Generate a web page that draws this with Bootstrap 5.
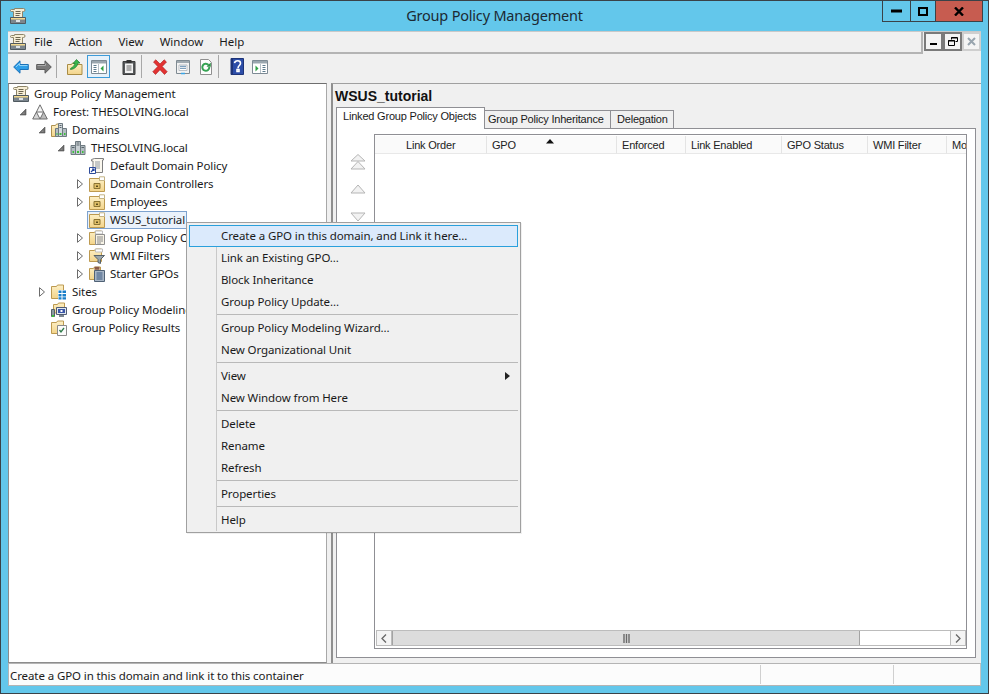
<!DOCTYPE html>
<html lang="en">
<head>
<meta charset="utf-8">
<title>Group Policy Management</title>
<link href="https://cdn.jsdelivr.net/npm/bootstrap@5.3.0/dist/css/bootstrap.min.css" rel="stylesheet">
<style>
html,body{margin:0;height:100%;overflow:hidden;background:#63c7eb}
body{font-family:"Noto Sans","Liberation Sans",sans-serif;font-size:11.5px;letter-spacing:-.1px;line-height:18px;color:#1a1a1a}
.gp-win{width:989px;height:694px;border:1px solid #3a4248;background:#63c7eb;position:relative}
.gp-title{height:30px;display:grid;grid-template-columns:1fr auto 1fr;align-items:start}
.gp-title-icon{margin:7px 0 0 9px;display:block}
.gp-title-text{font-size:14.5px;letter-spacing:-.2px;line-height:29px;color:#1c2a33}
.gp-ctrls{display:flex;justify-content:flex-end;margin-top:-1px;margin-right:5px}
.gp-ctrl{height:22px;border:1px solid #3a4248;border-left:0;display:flex;align-items:center;justify-content:center}
.gp-ctrl:first-child{border-left:1px solid #3a4248}
.gp-ctrl-min{width:29px}.gp-ctrl-max{width:25px}.gp-ctrl-close{width:47px;background:#c75c50}
.gp-client{height:655px;margin:0 7px;background:#f0f0f0;display:flex;flex-direction:column;border-top:1px solid #c9c9c9}
.gp-menubar{height:22px;display:flex;flex:none}
.gp-menu-main{flex:1;display:flex;align-items:center;border-right:2px solid #b4b4b4;border-bottom:2px solid #b4b4b4;padding-left:2px}
.gp-menu-item{padding:0 8px;line-height:18px;letter-spacing:0}
.gp-mdi{display:flex;width:58px;padding-left:1px}
.gp-mdi-btn{width:19px;height:19px;border:2px solid #7a7a7a;background:#f4f4f4;display:flex;align-items:center;justify-content:center}
.gp-mdi-off{border-color:#cfcfcf}
.gp-toolbar{height:29px;flex:none;display:flex;align-items:center;padding:0 0 4px 1px}
.gp-tool{width:23px;height:23px;display:flex;align-items:center;justify-content:center;flex:none}
.gp-tool-on{border:1px solid #3d9bd9;background:#e6f1fa;margin-left:1px}
.gp-tool-gap{margin-left:7px}
.gp-tsep{width:1px;height:23px;background:#a8a8a8;margin:0 6px 0 1px;flex:none}
.gp-panes{flex:1;display:flex;min-height:0}
.gp-tree{width:319px;flex:none;background:#fff;border:1px solid #8c8c8c;border-top-color:#6e6e6e;border-right-color:#a8a8a8;padding-top:1px;overflow:hidden}
.gp-row{height:18px;display:flex;align-items:center;white-space:nowrap}
.gp-lv0{padding-left:4px}.gp-lv1{padding-left:4px}.gp-lv2{padding-left:23px}.gp-lv3{padding-left:42px}.gp-lv4{padding-left:61px}
.gp-exp{width:19px;height:18px;flex:none;display:flex;align-items:center;justify-content:center}
.gp-node{display:flex;align-items:center;height:18px}
.gp-node svg{flex:none;margin-right:5px}
.gp-sel{background:#eaf2fb;box-shadow:inset 0 0 0 1px #7da2ce;margin-left:-2px;padding-left:2px;padding-right:2px;height:18px}
.gp-right{margin-left:4px;flex:1;min-width:0;display:flex;flex-direction:column;border-left:2px solid #8f8f8f;border-top:1px solid #a0a0a0}
.gp-head{height:23px;flex:none;padding-left:2px;font-family:"Liberation Sans",Arial,sans-serif;font-size:14px;letter-spacing:0;font-weight:700;line-height:24px;color:#111}
.gp-tabs{height:21px;flex:none;display:flex;align-items:flex-end;margin-left:3px;font-family:"Liberation Sans",Arial,sans-serif;font-size:11px;letter-spacing:-.2px;position:relative;z-index:1}
.gp-tab{height:18px;border:1px solid #8f8f94;border-bottom:0;border-left:0;background:#f0f0f0;line-height:17px;padding-left:3px}
.gp-tab-on{height:22px;width:149px;background:#fff;border-left:1px solid #8f8f94;padding-left:6px;line-height:17px;margin-bottom:-1px}
.gp-tab-inh{width:126px}.gp-tab-del{width:63px;padding-left:6px}
.gp-panel{flex:1;min-height:0;margin:0 5px 5px 3px;background:#fff;border:1px solid #8f8f94;display:flex}
.gp-moves{width:37px;flex:none;display:flex;flex-direction:column;align-items:center;padding-top:25px;padding-left:5px}
.gp-moves svg{display:block;margin-bottom:14px}
.gp-moves svg:nth-child(2){margin-bottom:16px}
.gp-list{flex:1;min-width:0;margin:5px 8px 8px 0;border:1px solid #8f8f94;display:flex;flex-direction:column;justify-content:space-between}
.gp-lhead{height:18px;margin-top:1px;display:flex;font-family:"Liberation Sans",Arial,sans-serif;font-size:11px;letter-spacing:-.2px;line-height:18px;background:#fafafa;overflow:hidden;position:relative;color:#222}
.gp-lh{flex:none;padding-left:5px;border-right:1px solid #e4e4e4;border-bottom:1px solid #e8e8e8;box-sizing:border-box}
.gp-c1{width:112px;padding-left:31px}.gp-c2{width:130px}.gp-c3{width:69px}.gp-c4{width:96px}.gp-c5{width:86px}.gp-c6{width:79px}.gp-c7{width:19px;border-right:0}
.gp-sort{position:absolute;left:171px;top:3px;display:block}
.gp-scroll{height:16px;margin:0 0 2px 1px;border:1px solid #bcbcbc;display:flex;flex:none;background:#fff}
.gp-sb-btn{width:15px;flex:none;display:flex;align-items:center;justify-content:center;background:#f4f4f4}
.gp-sb-l{border-right:1px solid #bcbcbc}.gp-sb-r{border-left:1px solid #bcbcbc;margin-left:auto}
.gp-thumb{width:468px;flex:none;background:#dcdcdc;border:1px solid #a3a3a3;border-width:0 1px;display:flex;align-items:center;justify-content:center}
.gp-status{height:23px;flex:none;display:flex;background:#fcfcfc;border:1px solid #b4b4b4;border-right-color:#c4c4c4;line-height:21px}
.gp-st1{width:752px;padding-left:1px;border-right:1px solid #d0d0d0;margin:1px 0}
.gp-st2{width:133px;border-right:1px solid #d0d0d0;margin:1px 0}
.gp-ctx{position:absolute;left:185px;top:221px;width:335px;background:#f0f0f0;border:1px solid #a0a0a0;padding:2px 2px 1px;z-index:5;box-shadow:1px 1px 0 rgba(0,0,0,.06)}
.gp-ctx::before{content:"";position:absolute;left:29px;top:24px;bottom:1px;width:1px;background:#c9c9c9}
.gp-ci{height:22px;line-height:20px;padding:0 8px 1px 32px;display:flex;align-items:center;justify-content:space-between;position:relative}
.gp-ci-on{background:#dbeafc;box-shadow:inset 0 0 0 1px #2aa0dc}
.gp-cs{height:4px;margin-left:28px;position:relative}
.gp-cs::after{content:"";display:block;height:1px;background:#b9b9b9;position:relative;top:1px}
</style>
</head>
<body>
<svg width="0" height="0" class="d-block" aria-hidden="true">
<defs>
<linearGradient id="gf" x1="0" y1="0" x2="0" y2="1"><stop offset="0" stop-color="#fdf0c6"/><stop offset="1" stop-color="#f3d48a"/></linearGradient>
<symbol id="i-gpm" viewBox="0 0 16 16">
<path d="M4.500.5h9a1.500 1.500 0 0 1 0 3H12.500v6h-9V3.500h-2a1 1 0 0 1 0-2h3z" fill="#f7eed5" stroke="#8d8468"/>
<path d="M5.500 3.500h5M5.500 5.500h5M5.500 7.500h4" stroke="#6d6650"/>
<path d="M.5 9.500h15v6H.5z" fill="#7c868e" stroke="#505a60"/>
<path d="M1 10h14v1.500H1z" fill="#f3d98f"/><path d="M6 12h4v2H6z" fill="#dfe4e8"/>
</symbol>
<symbol id="i-forest" viewBox="0 0 16 16">
<path d="M8 .8 11.600 8H4.400z" fill="#f4f4f4" stroke="#6e6e6e"/>
<path d="M4.400 8 8 15H.7z" fill="#d6d6d6" stroke="#6e6e6e"/>
<path d="M11.600 8 15.300 15H8z" fill="#bdbdbd" stroke="#6e6e6e"/>
</symbol>
<symbol id="i-server" viewBox="0 0 16 16">
<path d="M5.500 1.500h5v13h-5z" fill="#c9d0d4" stroke="#6e7a80"/><path d="M1 5.500h4.500v9H1zM10.500 5.500H15v9h-4.500z" fill="#b3bcc2" stroke="#6e7a80"/>
<path d="M6.500 3h3M6.500 5h3M2 7.500h2.500M11.500 7.500H14" stroke="#59656b"/>
<path d="M7 11h2v2H7zM2.500 11h1.500v2H2.500zM12 11h1.500v2H12z" fill="#3cc03c"/>
</symbol>
<symbol id="i-domains" viewBox="0 0 16 16">
<path d="M.5 3.500h4l1-1.500h5v12.500H.5z" fill="url(#gf)" stroke="#ad914f"/>
<path d="M7.500 1.500h4v13h-4z" fill="#d4dade" stroke="#6e7a80"/><path d="M4.500 6.500h3v8h-3zM11.500 6.500h4v8h-4z" fill="#b3bcc2" stroke="#6e7a80"/>
<path d="M8.500 3.500h2M8.500 5.500h2" stroke="#59656b"/><path d="M8.500 11h2v2h-2zM5.500 11h1v2h-1zM13 11h1.500v2H13z" fill="#3cc03c"/>
</symbol>
<symbol id="i-link" viewBox="0 0 16 16">
<path d="M5.500.5h9v1.500h-1V14.500H4V3H2.500V1.500z" fill="#fbf8ef" stroke="#7f7f7f"/>
<path d="M6 4h5M6 6h5M6 8h5M6 10h5" stroke="#8f98a0"/>
<path d="M.5 9.500h6v6h-6z" fill="#fff" stroke="#2e4c9a"/><path d="M2 14l3-3M3 11h2v2" stroke="#24459e" fill="none" stroke-width="1.200"/>
</symbol>
<symbol id="i-ou" viewBox="0 0 16 16">
<path d="M.5 2.500h10v2h5v11H.5z" fill="url(#gf)" stroke="#bd9a50"/>
<path d="M10.500 .8h5v3.700h-5z" fill="#fff" stroke="#c4b486"/>
<path d="M5 7.500h6v5H5z" fill="#e0bf68" stroke="#8b7433"/><path d="M7 9.500h2v1.500H7z" fill="#5c4c1c"/>
</symbol>
<symbol id="i-gpos" viewBox="0 0 16 16">
<path d="M.5 2.500h5l1-1.500h6v13.500H.5z" fill="url(#gf)" stroke="#bd9a50"/>
<path d="M6.500 1h7v3h-7z" fill="#fff" stroke="#bfbfbf"/>
<path d="M6.500 4.500h9v10h-9z" fill="#f7f3e6" stroke="#8f8f8f"/><path d="M8 7h6M8 9h6M8 11h6M8 13h4" stroke="#8a8a8a"/>
</symbol>
<symbol id="i-wmi" viewBox="0 0 16 16">
<path d="M.5 2.500h5l1-1.500h6v12.500H.5z" fill="url(#gf)" stroke="#bd9a50"/>
<path d="M6.500 1h7v3h-7z" fill="#fff" stroke="#bfbfbf"/>
<path d="M5 7.500h10.500l-4 4v4l-2.500-1v-3z" fill="#9aa6ac" stroke="#566168"/>
</symbol>
<symbol id="i-starter" viewBox="0 0 16 16">
<path d="M.5 2.500h4l1-1.500h6v12.500H.5z" fill="url(#gf)" stroke="#bd9a50"/>
<path d="M5.500 .8h5v3h-5z" fill="#8a5a48"/>
<path d="M5.500 4.500h10v11h-10z" fill="#a8b6c6" stroke="#4f6175"/><path d="M7.500 7h6M7.500 9h6M7.500 11h6M7.500 13h6" stroke="#3d5a82"/>
</symbol>
<symbol id="i-sites" viewBox="0 0 16 16">
<path d="M.5 2.500h5l1-1.500h6v13.500H.5z" fill="url(#gf)" stroke="#bd9a50"/>
<path d="M7 6h8.500v9.500H7z" fill="#fff"/>
<path d="M7.500 6.500h3v2.500h-3zM11.500 6.500h3.500v2.500h-3.500zM7.500 10h3v2.500h-3zM11.500 10h3.500v2.500h-3.500zM7.500 13.300h3V15.500h-3zM11.500 13.300h3.500V15.500h-3.500z" fill="#1a7fc9"/>
</symbol>
<symbol id="i-model" viewBox="0 0 16 16">
<path d="M2.500 2.500h4l1-1.500h6v10h-11z" fill="url(#gf)" stroke="#bd9a50"/>
<path d="M.5 7.500h3v7h-3z" fill="#8c9aa0" stroke="#55626a"/>
<path d="M5.500 5.500h10v7h-10z" fill="#dfe8ee" stroke="#505b75"/><path d="M7 7h7v4H7z" fill="#3a55a8"/><path d="M9.500 8h2v2h-2z" fill="#fff"/><path d="M8 13h5v2H8z" fill="#7d8790"/><path d="M1 13h2v2H1z" fill="#3cc03c"/>
</symbol>
<symbol id="i-results" viewBox="0 0 16 16">
<path d="M.5 2.500h5l1-1.500h6v12.500H.5z" fill="url(#gf)" stroke="#bd9a50"/>
<path d="M6.500 5.500h9v10h-9z" fill="#fbfbfb" stroke="#8a8a8a"/>
<path d="M8.500 10l1.500 2 3-4" stroke="#2e7a4a" fill="none" stroke-width="1.300"/>
</symbol>
<symbol id="i-closed" viewBox="0 0 8 10"><path d="M1.500 .7 6.500 5l-5 4.300z" fill="#fff" stroke="#6b6b6b"/></symbol>
<symbol id="i-open" viewBox="0 0 8 8"><path d="M7 1v6H1z" fill="#6b6b6b" stroke="#505050" stroke-width=".6"/><path d="M5.500 3.800v2.200H3.200z" fill="#8a8a8a"/></symbol>
</defs>
</svg>

<div class="gp-win">
  <header class="gp-title">
    <div><svg class="gp-title-icon" width="16" height="16"><use href="#i-gpm"/></svg></div>
    <div class="gp-title-text">Group Policy Management</div>
    <div class="gp-ctrls">
      <div class="gp-ctrl gp-ctrl-min"><svg width="11" height="4"><rect width="11" height="3" y="0.500" fill="#000"/></svg></div>
      <div class="gp-ctrl gp-ctrl-max"><svg width="10" height="9"><rect x="1" y="1" width="8" height="7" fill="none" stroke="#000" stroke-width="2"/></svg></div>
      <div class="gp-ctrl gp-ctrl-close"><svg width="10" height="9" viewBox="0 0 10 9"><path d="M1 .5 9 8.500M9 .5 1 8.500" stroke="#000" stroke-width="2.400"/></svg></div>
    </div>
  </header>
  <div class="gp-client">
    <nav class="gp-menubar">
      <div class="gp-menu-main">
        <svg width="16" height="16"><use href="#i-gpm"/></svg>
        <span class="gp-menu-item">File</span><span class="gp-menu-item">Action</span><span class="gp-menu-item">View</span><span class="gp-menu-item">Window</span><span class="gp-menu-item">Help</span>
      </div>
      <div class="gp-mdi">
        <div class="gp-mdi-btn"><svg width="7" height="9"><rect y="6" width="7" height="2" fill="#000"/></svg></div>
        <div class="gp-mdi-btn"><svg width="10" height="9" viewBox="0 0 10 9"><path d="M3.500 2.500v-2h6v4h-2" fill="none" stroke="#000"/><path d="M.5 3.500h6v5h-6z" fill="none" stroke="#000"/><path d="M3 1h6M0 4h7" stroke="#000"/></svg></div>
        <div class="gp-mdi-btn gp-mdi-off"><svg width="9" height="9" viewBox="0 0 9 9"><path d="M1 1l7 7M8 1 1 8" stroke="#98a4ae" stroke-width="2"/></svg></div>
      </div>
    </nav>
    <div class="gp-toolbar">
      <div class="gp-tool"><svg width="16" height="14" viewBox="0 0 16 14"><path d="M.7 7 7 .8v3.700h8.300v5H7v3.700z" fill="#2f9fe8" stroke="#1b71b8"/><path d="M3 7l3.500-3.500V5.500h8" stroke="#8fd2f7" fill="none"/></svg></div>
      <div class="gp-tool"><svg width="16" height="14" viewBox="0 0 16 14"><path d="M15.300 7 9 .8v3.700H.7v5H9v3.700z" fill="#7a7a7a" stroke="#5a5a5a"/><path d="M1.500 5.500h8V3.500" stroke="#aaa" fill="none"/></svg></div>
      <div class="gp-tsep"></div>
      <div class="gp-tool"><svg width="16" height="16" viewBox="0 0 16 16"><path d="M.5 5.500h4l1-1.500h2l1 1.500h6.500v10H.5z" fill="url(#gf)" stroke="#a98c45"/><path d="M3.500 9.500C6 8 7.500 6.500 8 4.500H6L9.500.5 13 4h-2c-.5 3-3 6-7.500 6.500z" fill="#39b54a" stroke="#1f7a30" stroke-width=".7"/></svg></div>
      <div class="gp-tool gp-tool-on"><svg width="16" height="14" viewBox="0 0 16 14"><path d="M.5.5h15v13H.5z" fill="#fff" stroke="#7d8a94"/><path d="M1 1h14v2.500H1z" fill="#9aa6ae"/><path d="M2.500 5.500h3M2.500 7.500h3M2.500 9.500h3M2.500 11.500h3" stroke="#5d7a8c"/><path d="M7.500 4v9" stroke="#b5bfc6"/><path d="M12.500 5.500v6l-3-3z" fill="#2ea043"/></svg></div>
      <div class="gp-tool gp-tool-gap"><svg width="14" height="16" viewBox="0 0 14 16"><path d="M1 2.500h12v13H1z" fill="#55585a" stroke="#3c3c3c"/><path d="M3 4.500h8v9.500H3z" fill="#f2f2f2"/><path d="M4.500 1h5v3h-5z" fill="#333"/><path d="M4.500 7h5M4.500 9h5M4.500 11h5" stroke="#666"/></svg></div>
      <div class="gp-tsep"></div>
      <div class="gp-tool"><svg width="16" height="16" viewBox="0 0 16 16"><path d="M1.500 3 3.800.8 8 5 12.200.8 14.500 3 10.200 7.500l5 5.200L12.500 15.500 8 10.700 3.500 15.500.8 12.700l5-5.200z" fill="#e23232" stroke="#a81f1f" stroke-width=".6"/></svg></div>
      <div class="gp-tool"><svg width="16" height="16" viewBox="0 0 16 16"><path d="M1.500 1.500h13v13h-13z" fill="#f2f2f2" stroke="#7f8a92"/><path d="M2 2h12v2H2z" fill="#9fa9b0"/><path d="M4 6h8v5.500H4z" fill="#fff" stroke="#a3abb2" stroke-width=".7"/><path d="M5 7.300h6M5 9.300h6" stroke="#5e89ad"/><path d="M6 14.500h4" stroke="#3ba5e6" stroke-width="1.500"/></svg></div>
      <div class="gp-tool"><svg width="14" height="16" viewBox="0 0 14 16"><path d="M1.500.5h8l3 3v12h-11z" fill="#fdfdfd" stroke="#8f8f8f"/><path d="M10.300 8A3.500 3.500 0 1 1 9.500 6" fill="none" stroke="#36a353" stroke-width="2"/><path d="M7.500 7.800h4.300V3.500z" fill="#2f8f47"/></svg></div>
      <div class="gp-tsep"></div>
      <div class="gp-tool"><svg width="14" height="17" viewBox="0 0 14 17"><path d="M1 .5h12.500v16H1z" fill="#2c4da8" stroke="#1e3478"/><path d="M1 1h2v15H1z" fill="#1e3478"/><path d="M4.500 5.200C5 2 10.500 2 10.500 5.200c0 2.300-2.500 2.300-2.500 5M7 11.500h2v2H7z" fill="none" stroke="#fff" stroke-width="1.600"/></svg></div>
      <div class="gp-tool"><svg width="16" height="14" viewBox="0 0 16 14"><path d="M.5.5h15v13H.5z" fill="#fff" stroke="#7d8a94"/><path d="M1 1h14v2.500H1z" fill="#9aa6ae"/><path d="M10.500 5.500h3M10.500 7.500h3M10.500 9.500h3M10.500 11.500h3" stroke="#5d7a8c"/><path d="M8.500 4v9" stroke="#b5bfc6"/><path d="M3.500 5.500v6l3-3z" fill="#2ea043"/></svg></div>
    </div>
    <div class="gp-panes">
      <aside class="gp-tree">
        <div class="gp-row gp-lv0"><span class="gp-node"><svg width="16" height="16"><use href="#i-gpm"/></svg>Group Policy Management</span></div>
        <div class="gp-row gp-lv1"><span class="gp-exp"><svg width="8" height="8"><use href="#i-open"/></svg></span><span class="gp-node"><svg width="16" height="16"><use href="#i-forest"/></svg>Forest: THESOLVING.local</span></div>
        <div class="gp-row gp-lv2"><span class="gp-exp"><svg width="8" height="8"><use href="#i-open"/></svg></span><span class="gp-node"><svg width="16" height="16"><use href="#i-domains"/></svg>Domains</span></div>
        <div class="gp-row gp-lv3"><span class="gp-exp"><svg width="8" height="8"><use href="#i-open"/></svg></span><span class="gp-node"><svg width="16" height="16"><use href="#i-server"/></svg>THESOLVING.local</span></div>
        <div class="gp-row gp-lv4"><span class="gp-exp"></span><span class="gp-node"><svg width="16" height="16"><use href="#i-link"/></svg>Default Domain Policy</span></div>
        <div class="gp-row gp-lv4"><span class="gp-exp"><svg width="8" height="10"><use href="#i-closed"/></svg></span><span class="gp-node"><svg width="16" height="16"><use href="#i-ou"/></svg>Domain Controllers</span></div>
        <div class="gp-row gp-lv4"><span class="gp-exp"><svg width="8" height="10"><use href="#i-closed"/></svg></span><span class="gp-node"><svg width="16" height="16"><use href="#i-ou"/></svg>Employees</span></div>
        <div class="gp-row gp-lv4"><span class="gp-exp"></span><span class="gp-node gp-sel"><svg width="16" height="16"><use href="#i-ou"/></svg>WSUS_tutorial</span></div>
        <div class="gp-row gp-lv4"><span class="gp-exp"><svg width="8" height="10"><use href="#i-closed"/></svg></span><span class="gp-node"><svg width="16" height="16"><use href="#i-gpos"/></svg>Group Policy Objects</span></div>
        <div class="gp-row gp-lv4"><span class="gp-exp"><svg width="8" height="10"><use href="#i-closed"/></svg></span><span class="gp-node"><svg width="16" height="16"><use href="#i-wmi"/></svg>WMI Filters</span></div>
        <div class="gp-row gp-lv4"><span class="gp-exp"><svg width="8" height="10"><use href="#i-closed"/></svg></span><span class="gp-node"><svg width="16" height="16"><use href="#i-starter"/></svg>Starter GPOs</span></div>
        <div class="gp-row gp-lv2"><span class="gp-exp"><svg width="8" height="10"><use href="#i-closed"/></svg></span><span class="gp-node"><svg width="16" height="16"><use href="#i-sites"/></svg>Sites</span></div>
        <div class="gp-row gp-lv2"><span class="gp-exp"></span><span class="gp-node"><svg width="16" height="16"><use href="#i-model"/></svg>Group Policy Modeling</span></div>
        <div class="gp-row gp-lv2"><span class="gp-exp"></span><span class="gp-node"><svg width="16" height="16"><use href="#i-results"/></svg>Group Policy Results</span></div>
      </aside>
      <section class="gp-right">
        <div class="gp-head">WSUS_tutorial</div>
        <div class="gp-tabs">
          <div class="gp-tab gp-tab-on">Linked Group Policy Objects</div>
          <div class="gp-tab gp-tab-inh">Group Policy Inheritance</div>
          <div class="gp-tab gp-tab-del">Delegation</div>
        </div>
        <div class="gp-panel">
          <div class="gp-moves">
            <svg width="16" height="16" viewBox="0 0 16 16"><path d="M8 .5 15 7H1zM8 7.500 15 15H1z" fill="#f2f2f2" stroke="#b5b5b5"/></svg>
            <svg width="16" height="11" viewBox="0 0 16 11"><path d="M8 1 15 9H1z" fill="#f2f2f2" stroke="#b5b5b5"/></svg>
            <svg width="16" height="11" viewBox="0 0 16 11"><path d="M8 10 15 2H1z" fill="#f2f2f2" stroke="#b5b5b5"/></svg>
          </div>
          <div class="gp-list">
            <div class="gp-lhead">
              <div class="gp-lh gp-c1">Link Order</div>
              <div class="gp-lh gp-c2">GPO</div>
              <div class="gp-lh gp-c3">Enforced</div>
              <div class="gp-lh gp-c4">Link Enabled</div>
              <div class="gp-lh gp-c5">GPO Status</div>
              <div class="gp-lh gp-c6">WMI Filter</div>
              <div class="gp-lh gp-c7">Mo</div>
              <svg class="gp-sort" width="8" height="5" viewBox="0 0 8 5"><path d="M4 0 8 4.500H0z" fill="#111"/></svg>
            </div>
            <div class="gp-scroll">
              <div class="gp-sb-btn gp-sb-l"><svg width="6" height="9" viewBox="0 0 6 9"><path d="M5 .5 1 4.500l4 4" fill="none" stroke="#666" stroke-width="1.300"/></svg></div>
              <div class="gp-thumb"><svg width="7" height="9" viewBox="0 0 7 9"><path d="M1 0v9M3.500 0v9M6 0v9" stroke="#6a6a6a" stroke-width="1.400"/></svg></div>
              <div class="gp-sb-btn gp-sb-r"><svg width="6" height="9" viewBox="0 0 6 9"><path d="M1 .5l4 4-4 4" fill="none" stroke="#666" stroke-width="1.300"/></svg></div>
            </div>
          </div>
        </div>
      </section>
    </div>
    <footer class="gp-status">
      <div class="gp-st1">Create a GPO in this domain and link it to this container</div>
      <div class="gp-st2"></div>
    </footer>
  </div>
  <div class="gp-ctx">
    <div class="gp-ci gp-ci-on">Create a GPO in this domain, and Link it here...</div>
    <div class="gp-ci">Link an Existing GPO...</div>
    <div class="gp-ci">Block Inheritance</div>
    <div class="gp-ci">Group Policy Update...</div>
    <div class="gp-cs"></div>
    <div class="gp-ci">Group Policy Modeling Wizard...</div>
    <div class="gp-ci">New Organizational Unit</div>
    <div class="gp-cs"></div>
    <div class="gp-ci">View<svg width="5" height="8" viewBox="0 0 5 8"><path d="M0 0l5 4-5 4z" fill="#222"/></svg></div>
    <div class="gp-ci">New Window from Here</div>
    <div class="gp-cs"></div>
    <div class="gp-ci">Delete</div>
    <div class="gp-ci">Rename</div>
    <div class="gp-ci">Refresh</div>
    <div class="gp-cs"></div>
    <div class="gp-ci">Properties</div>
    <div class="gp-cs"></div>
    <div class="gp-ci">Help</div>
  </div>
</div>
<script src="https://cdn.jsdelivr.net/npm/bootstrap@5.3.0/dist/js/bootstrap.bundle.min.js"></script>
</body>
</html>
